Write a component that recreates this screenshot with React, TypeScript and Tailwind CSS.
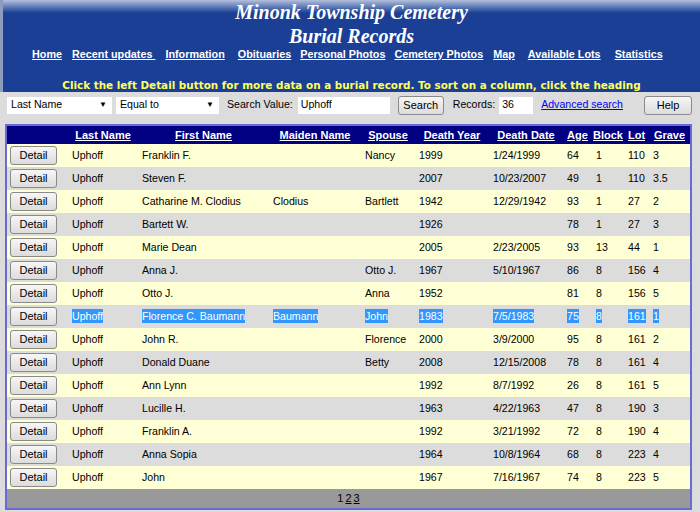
import React from 'react';

type Row = {
	last: string;
	first: string;
	maiden: string;
	spouse: string;
	year: string;
	date: string;
	age: string;
	block: string;
	lot: string;
	grave: string;
};

const rows: Row[] = [
	{ last: 'Uphoff', first: 'Franklin F.', maiden: '', spouse: 'Nancy', year: '1999', date: '1/24/1999', age: '64', block: '1', lot: '110', grave: '3' },
	{ last: 'Uphoff', first: 'Steven F.', maiden: '', spouse: '', year: '2007', date: '10/23/2007', age: '49', block: '1', lot: '110', grave: '3.5' },
	{ last: 'Uphoff', first: 'Catharine M. Clodius', maiden: 'Clodius', spouse: 'Bartlett', year: '1942', date: '12/29/1942', age: '93', block: '1', lot: '27', grave: '2' },
	{ last: 'Uphoff', first: 'Bartett W.', maiden: '', spouse: '', year: '1926', date: '', age: '78', block: '1', lot: '27', grave: '3' },
	{ last: 'Uphoff', first: 'Marie Dean', maiden: '', spouse: '', year: '2005', date: '2/23/2005', age: '93', block: '13', lot: '44', grave: '1' },
	{ last: 'Uphoff', first: 'Anna J.', maiden: '', spouse: 'Otto J.', year: '1967', date: '5/10/1967', age: '86', block: '8', lot: '156', grave: '4' },
	{ last: 'Uphoff', first: 'Otto J.', maiden: '', spouse: 'Anna', year: '1952', date: '', age: '81', block: '8', lot: '156', grave: '5' },
	{ last: 'Uphoff', first: 'Florence C. Baumann', maiden: 'Baumann', spouse: 'John', year: '1983', date: '7/5/1983', age: '75', block: '8', lot: '161', grave: '1' },
	{ last: 'Uphoff', first: 'John R.', maiden: '', spouse: 'Florence', year: '2000', date: '3/9/2000', age: '95', block: '8', lot: '161', grave: '2' },
	{ last: 'Uphoff', first: 'Donald Duane', maiden: '', spouse: 'Betty', year: '2008', date: '12/15/2008', age: '78', block: '8', lot: '161', grave: '4' },
	{ last: 'Uphoff', first: 'Ann Lynn', maiden: '', spouse: '', year: '1992', date: '8/7/1992', age: '26', block: '8', lot: '161', grave: '5' },
	{ last: 'Uphoff', first: 'Lucille H.', maiden: '', spouse: '', year: '1963', date: '4/22/1963', age: '47', block: '8', lot: '190', grave: '3' },
	{ last: 'Uphoff', first: 'Franklin A.', maiden: '', spouse: '', year: '1992', date: '3/21/1992', age: '72', block: '8', lot: '190', grave: '4' },
	{ last: 'Uphoff', first: 'Anna Sopia', maiden: '', spouse: '', year: '1964', date: '10/8/1964', age: '68', block: '8', lot: '223', grave: '4' },
	{ last: 'Uphoff', first: 'John', maiden: '', spouse: '', year: '1967', date: '7/16/1967', age: '74', block: '8', lot: '223', grave: '5' },
];

const navLinks = [
	{ label: 'Home', cls: '' },
	{ label: 'Recent updates\u00a0', cls: 'ml-[10px]' },
	{ label: 'Information', cls: 'ml-[10px]' },
	{ label: 'Obituaries', cls: 'ml-[13px]' },
	{ label: 'Personal Photos', cls: 'ml-[9px]' },
	{ label: 'Cemetery Photos', cls: 'ml-[9px]' },
	{ label: 'Map', cls: 'ml-[10px]' },
	{ label: 'Available Lots', cls: 'ml-[13px]' },
	{ label: 'Statistics', cls: 'ml-[14px]' },
];

const headers = ['', 'Last Name', 'First Name', 'Maiden Name', 'Spouse', 'Death Year', 'Death Date', 'Age', 'Block', 'Lot', 'Grave'];
const widths = [61, 70, 131, 92, 54, 74, 74, 29, 32, 25, 41];

function Cell({ value, selected }: { value: string; selected: boolean }) {
	if (!value) return <td className="pl-[4px]" />;
	return (
		<td className="pl-[4px] whitespace-nowrap">
			{selected ? <span className="bg-[#3297fd] text-white py-[1px]">{value}</span> : value}
		</td>
	);
}

function Select({ label, width }: { label: string; width: string }) {
	return (
		<div className={`${width} h-[17px] bg-white flex items-center justify-between pl-[4px] pr-[5px]`}>
			<span>{label}</span>
			<span className="text-[8px] text-black">▼</span>
		</div>
	);
}

function GrayButton({ label, cls }: { label: string; cls: string }) {
	return (
		<button className={`${cls} border border-[#8a8a8a] rounded-[3px] bg-gradient-to-b from-[#f6f6f6] to-[#dcdcdc] text-[11px] text-black leading-none`}>
			{label}
		</button>
	);
}

export default function App() {
	return (
		<div className="w-[700px] h-[512px] overflow-hidden bg-[#dcdcdc] font-['Liberation_Sans',Arial,sans-serif] text-black">
			{/* header */}
			<div className="h-[92px] bg-gradient-to-b from-[#b4c0dc] via-[#1b3f94] via-[14%] to-[#1b3f94] border-l-[3px] border-[#8e9cbd] text-white">
				<div className="flex flex-col items-center font-['Liberation_Serif','Times_New_Roman',serif] italic font-bold">
					<div className="text-[20px] leading-[22px] pt-[1px]">Minonk Township Cemetery</div>
					<div className="text-[20px] leading-[22px] mt-[2px]">Burial Records</div>
				</div>
				<div className="flex pl-[29px] text-[10.8px] font-bold leading-[14px]">
					{navLinks.map((l) => (
						<span key={l.label} className={`${l.cls} underline whitespace-pre`}>
							{l.label}
						</span>
					))}
				</div>
				<div className="text-center text-[#ffff5e] text-[10.4px] font-bold mt-[17px] leading-[14px] font-['DejaVu_Sans',sans-serif]">
					Click the left Detail button for more data on a burial record. To sort on a column, click the heading
				</div>
			</div>

			{/* search bar */}
			<div className="flex items-center h-[24px] mt-[1px] pl-[7px] text-[10.6px]">
				<Select label="Last Name" width="w-[105px]" />
				<div className="ml-[4px]">
					<Select label="Equal to" width="w-[103px]" />
				</div>
				<span className="ml-[8px]">Search Value:</span>
				<div className="ml-[5px] w-[92px] h-[17px] bg-white pl-[3px] flex items-center">Uphoff</div>
				<GrayButton label="Search" cls="ml-[8px] w-[46px] h-[19px]" />
				<span className="ml-[9px]">Records:</span>
				<div className="ml-[4px] w-[34px] h-[17px] bg-white pl-[3px] flex items-center">36</div>
				<a className="ml-[8px] text-[#0000ee] underline">Advanced search</a>
				<GrayButton label="Help" cls="ml-[21px] w-[48px] h-[19px]" />
			</div>

			{/* table */}
			<div className="mt-[7px] ml-[5px] w-[687px] border-2 border-[#6a6ad6]">
				<table className="table-fixed border-collapse w-[683px] text-[10.6px]">
					<colgroup>
						{widths.map((w, i) => (
							<col key={i} style={{ width: w }} />
						))}
					</colgroup>
					<thead>
						<tr className="bg-[#000080] text-white h-[18px]">
							{headers.map((h, i) => (
								<th key={i} className="font-bold text-[11px] text-center whitespace-nowrap p-0">
									{h && <span className="underline">{h}</span>}
								</th>
							))}
						</tr>
					</thead>
					<tbody>
						{rows.map((r, i) => {
							const selected = i === 7;
							return (
								<tr key={i} className={`h-[23px] ${i % 2 === 0 ? 'bg-[#ffffd6]' : 'bg-[#dcdcdc]'}`}>
									<td className="pl-[3px]">
										<GrayButton label="Detail" cls="w-[47px] h-[19px] block" />
									</td>
									<Cell value={r.last} selected={selected} />
									<Cell value={r.first} selected={selected} />
									<Cell value={r.maiden} selected={selected} />
									<Cell value={r.spouse} selected={selected} />
									<Cell value={r.year} selected={selected} />
									<Cell value={r.date} selected={selected} />
									<Cell value={r.age} selected={selected} />
									<Cell value={r.block} selected={selected} />
									<Cell value={r.lot} selected={selected} />
									<Cell value={r.grave} selected={selected} />
								</tr>
							);
						})}
					</tbody>
				</table>
				<div className="h-[19px] bg-[#999999] flex items-center justify-center text-[11px]">
					<span>1</span>
					<span className="ml-[2px] underline">2</span>
					<span className="ml-[2px] underline">3</span>
				</div>
			</div>
		</div>
	);
}
